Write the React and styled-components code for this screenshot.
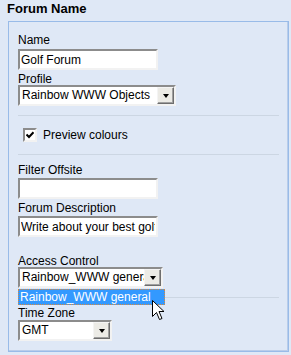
import React from "react";
import styled, { createGlobalStyle } from "styled-components";

const GlobalStyle = createGlobalStyle`
  html, body {
    margin: 0;
    padding: 0;
    background: #dfe8f6;
  }
  body {
    width: 291px;
    height: 355px;
    overflow: hidden;
    font-family: "Liberation Sans", Arial, sans-serif;
    font-size: 12px;
    color: #000;
  }
`;

const Title = styled.div`
  height: 21px;
  box-sizing: border-box;
  padding: 1px 0 0 7px;
  font-size: 13px;
  font-weight: bold;
  line-height: 15px;
`;

const Fieldset = styled.div`
  position: relative;
  margin-left: 8px;
  width: 281px;
  height: 331px;
  box-sizing: border-box;
  border: 1px solid #99bbe8;
  box-shadow: inset -1px -1px 0 #b9cdea;
  padding: 12px 9px 0;
  display: flex;
  flex-direction: column;
  align-items: flex-start;
`;

const Field = styled.div`
  position: relative;
  margin-top: ${(p) => p.$top || 0}px;
  margin-bottom: ${(p) => p.$bottom ?? 3}px;
`;

const Label = styled.div`
  height: 13px;
  line-height: 13px;
  margin-bottom: ${(p) => p.$gap ?? 1}px;
  white-space: nowrap;
`;

const TextBox = styled.input`
  display: block;
  width: ${(p) => p.$w}px;
  height: 21px;
  box-sizing: border-box;
  margin: 0;
  padding: 0 1px;
  border: 2px solid;
  border-color: #8c8c8c #f2f2f2 #f2f2f2 #8c8c8c;
  background: #fff;
  font: inherit;
  line-height: 17px;
  color: #000;
  outline: none;
`;

const SelectBox = styled.div`
  display: flex;
  width: ${(p) => p.$w}px;
  height: 21px;
  box-sizing: border-box;
  border: 2px solid;
  border-color: #8c8c8c #f2f2f2 #f2f2f2 #8c8c8c;
  background: #fff;
`;

const SelectText = styled.span`
  flex: 1;
  padding: 0 2px;
  line-height: 17px;
  overflow: hidden;
  white-space: nowrap;
`;

const DropButton = styled.span`
  width: 17px;
  flex: none;
  box-sizing: border-box;
  border: 1px solid;
  border-color: #f4f4f4 #6e6e6e #6e6e6e #f4f4f4;
  box-shadow: inset -1px -1px 0 #a0a0a0;
  background: #ecebe6;
  display: flex;
  align-items: center;
  justify-content: center;

  &::after {
    content: "";
    width: 0;
    height: 0;
    border-style: solid;
    border-width: 4px 3.5px 0;
    border-color: #000 transparent transparent;
  }
`;

const Separator = styled.div`
  align-self: stretch;
  height: 1px;
  background: #ccd6e3;
  margin-top: ${(p) => p.$top || 0}px;
`;

const CheckRow = styled.label`
  align-self: stretch;
  height: 38px;
  display: flex;
  align-items: center;
  gap: 6px;
  padding-left: 5px;
`;

const CheckBox = styled.span`
  width: 14px;
  height: 14px;
  box-sizing: border-box;
  border: 2px solid;
  border-color: #8c8c8c #f2f2f2 #f2f2f2 #8c8c8c;
  background: #fff;
  display: flex;
  align-items: center;
  justify-content: center;
`;

const DropList = styled.div`
  position: absolute;
  left: 0;
  top: calc(100% + 1px);
  width: 147px;
  height: 16px;
  box-sizing: border-box;
  border: 1px dotted #d9893d;
  background: #3399ff;
  color: #fff;
  line-height: 14px;
  padding-left: 1px;
  white-space: nowrap;
  overflow: hidden;
`;

const Cursor = styled.svg`
  position: absolute;
  left: 134px;
  top: calc(100% + 12px);
  z-index: 2;
`;

const Select = ({ w, value }) => (
  <SelectBox $w={w}>
    <SelectText>{value}</SelectText>
    <DropButton />
  </SelectBox>
);

export default function App() {
  return (
    <>
      <GlobalStyle />
      <Title>Forum Name</Title>
      <Fieldset>
        <Field>
          <Label $gap={2}>Name</Label>
          <TextBox $w={140} readOnly value="Golf Forum" />
        </Field>
        <Field $bottom={0}>
          <Label $gap={-1}>Profile</Label>
          <Select w={158} value="Rainbow WWW Objects" />
        </Field>
        <Separator $top={9} />
        <CheckRow>
          <CheckBox>
            <svg width="8" height="8" viewBox="0 0 8 8">
              <path d="M0.5 3.5 L3 6 L7.5 1.2" fill="none" stroke="#000" strokeWidth="2" />
            </svg>
          </CheckBox>
          Preview colours
        </CheckRow>
        <Separator />
        <Field $top={9}>
          <Label>Filter Offsite</Label>
          <TextBox $w={140} readOnly value="" />
        </Field>
        <Field $bottom={18}>
          <Label>Forum Description</Label>
          <TextBox $w={140} readOnly value="Write about your best golf course" />
        </Field>
        <Field $bottom={0}>
          <Label $gap={-1}>Access Control</Label>
          <Select w={145} value="Rainbow_WWW general" />
          <DropList>Rainbow_WWW general</DropList>
          <Cursor width="13" height="21" viewBox="0 0 13 21">
            <path
              d="M0.5 0.5 L0.5 16.5 L4.5 12.5 L7.5 19.5 L10 18.5 L7 11.5 L12 11.5 Z"
              fill="#fff"
              stroke="#000"
              strokeWidth="1"
            />
          </Cursor>
        </Field>
        <Separator $top={9} />
        <Field $top={9}>
          <Label $gap={0}>Time Zone</Label>
          <Select w={94} value="GMT" />
        </Field>
      </Fieldset>
    </>
  );
}
